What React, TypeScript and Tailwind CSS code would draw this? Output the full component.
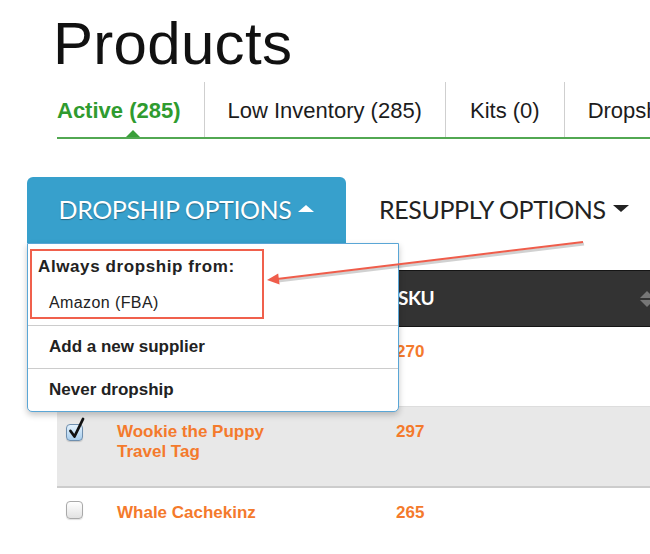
import React from "react";

function Checkbox({ checked }: { checked?: boolean }) {
  if (checked) {
    return (
      <div className="relative w-[17px] h-[17px] mt-[4px] rounded-[4px] border border-[#6f8fae] bg-gradient-to-b from-[#e4f2fd] to-[#a8cdec] shadow-[0_1px_1px_rgba(0,0,0,0.15)]">
        <svg className="absolute left-[1px] top-[-8px]" width="18" height="23" viewBox="0 0 18 23">
          <path d="M2.5 14 L6.5 19.5 L15 2" fill="none" stroke="#111" strokeWidth="2.8" strokeLinecap="round" strokeLinejoin="round" />
        </svg>
      </div>
    );
  }
  return (
    <div className="w-[17px] h-[18px] rounded-[4px] border border-[#a9a9a9] bg-gradient-to-b from-white to-[#e2e2e2] shadow-[0_1px_1px_rgba(0,0,0,0.12)]" />
  );
}

function Row({
  checked,
  name,
  sku,
  className,
}: {
  checked?: boolean;
  name?: string;
  sku: string;
  className: string;
}) {
  return (
    <div className={"flex " + className}>
      <div className="w-[60px] pl-[9px] pt-[13px] shrink-0">
        <Checkbox checked={checked} />
      </div>
      <div className="w-[279px] shrink-0 pt-[15px]">
        <div className="max-w-[175px] text-[17px] leading-[20px] font-bold text-[#f47a2c]">{name}</div>
      </div>
      <div className="pt-[15px] text-[17px] leading-[20px] font-bold text-[#f47a2c]">{sku}</div>
    </div>
  );
}

export default function App() {
  return (
    <div className="relative w-[650px] h-[554px] overflow-hidden bg-white font-['Liberation_Sans',Arial,sans-serif] text-[#1c1c1c]">
      <h1 className="pl-[53px] pt-[14px] text-[60px] leading-none tracking-[0.3px] text-[#111] font-normal">
        Products
      </h1>

      <div className="mt-[8px] ml-[57px] flex h-[57px] border-b-2 border-[#52a852] whitespace-nowrap text-[22px] leading-[26px]">
        <div className="relative shrink-0 flex items-center pt-[2px] pr-[23px] border-r border-[#cfcfcf] font-bold text-[#2f9b2f]">
          Active (285)
          <span className="absolute bottom-0 left-[69px] w-0 h-0 border-x-[7px] border-x-transparent border-b-[7px] border-b-[#3a9f3a]" />
        </div>
        <div className="shrink-0 flex items-center pt-[2px] px-[23px] border-r border-[#cfcfcf]">Low Inventory (285)</div>
        <div className="shrink-0 flex items-center pt-[2px] px-[24px] border-r border-[#cfcfcf]">Kits (0)</div>
        <div className="shrink-0 flex items-center pt-[2px] px-[23px]">Dropship (0)</div>
      </div>

      <div className="relative z-10 mt-[38px] ml-[27px] flex font-['Lato',sans-serif] text-[25px] tracking-[-0.4px] whitespace-nowrap">
        <div className="h-[66px] w-[319px] flex items-center justify-center gap-[7px] rounded-t-[6px] bg-[#37a0cc] text-white [text-shadow:0_1px_1px_rgba(0,0,0,0.35)]">
          <span>DROPSHIP OPTIONS</span>
          <span className="w-0 h-0 mb-[4px] border-x-[8px] border-x-transparent border-b-[7px] border-b-white" />
        </div>
        <div className="h-[66px] flex items-center gap-[7px] pl-[33px] text-[#222]">
          <span>RESUPPLY OPTIONS</span>
          <span className="w-0 h-0 mb-[4px] border-x-[8px] border-x-transparent border-t-[7px] border-t-[#222]" />
        </div>

        <div className="absolute left-0 top-[66px] w-[372px] bg-white border border-[#5aa6d6] rounded-b-[5px] shadow-[0_3px_6px_rgba(0,0,0,0.22)] font-['Liberation_Sans',Arial,sans-serif] tracking-normal text-[#222]">
          <div className="relative h-[81px] pt-[12px]">
            <div className="pl-[10px] text-[17px] leading-[22px] font-bold tracking-[0.6px]">Always dropship from:</div>
            <div className="pl-[21px] mt-[14px] text-[16px] leading-[22px] tracking-[0.4px]">Amazon (FBA)</div>
            <div className="absolute left-[2px] top-[5px] w-[234px] h-[70px] border-2 border-[#f0604c]" />
          </div>
          <div className="h-[43px] flex items-center pl-[21px] border-t border-[#cccccc] text-[17px] font-bold">
            Add a new supplier
          </div>
          <div className="h-[43px] flex items-center pl-[21px] border-t border-[#cccccc] text-[17px] font-bold">
            Never dropship
          </div>
        </div>
      </div>

      <div className="mt-[27px] ml-[57px] w-[620px]">
        <div className="h-[57px] flex items-center bg-[#333333] border-y border-[#151515]">
          <div className="w-[341px] shrink-0" />
          <div className="w-[242px] shrink-0 font-['Lato',sans-serif] font-bold text-[19px] tracking-[-0.5px] text-white">SKU</div>
          <div className="flex flex-col gap-[2px]">
            <span className="w-0 h-0 border-x-[7px] border-x-transparent border-b-[7px] border-b-[#767676]" />
            <span className="w-0 h-0 border-x-[7px] border-x-transparent border-t-[7px] border-t-[#767676]" />
          </div>
        </div>
        <Row sku="270" name="" className="h-[80px] border-b border-[#dddddd] bg-white" />
        <Row checked sku="297" name="Wookie the Puppy Travel Tag" className="h-[81px] border-b-2 border-[#cccccc] bg-[#e8e8e8]" />
        <Row sku="265" name="Whale Cachekinz" className="h-[80px] bg-white" />
      </div>

      <svg className="absolute left-0 top-0 z-20 pointer-events-none" width="650" height="554" viewBox="0 0 650 554">
        <line x1="584" y1="244" x2="278" y2="281" stroke="rgba(0,0,0,0.18)" strokeWidth="3" />
        <line x1="583" y1="242" x2="277" y2="279" stroke="#ef5d4b" strokeWidth="2" />
        <polygon points="267,280 279.6,284.6 278.2,273.6" fill="#ef5d4b" />
      </svg>
    </div>
  );
}
